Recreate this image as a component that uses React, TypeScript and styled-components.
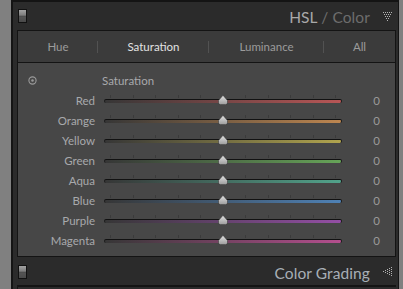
import React from "react";
import styled, { createGlobalStyle } from "styled-components";

const Global = createGlobalStyle`
  html, body { margin: 0; padding: 0; }
  body {
    background: #808080;
    font-family: Lato, "Open Sans", sans-serif;
    width: 403px;
    height: 289px;
    overflow: hidden;
  }
`;

const Page = styled.div`
  padding-left: 11px;
  height: 289px;
  box-sizing: border-box;
`;

const Panel = styled.div`
  width: 388px;
  height: 289px;
  box-sizing: border-box;
  background: #2b2b2b;
  border-left: 2px solid #141414;
  border-right: 1px solid #141414;
  border-top: 2px solid #141414;
  display: flex;
  flex-direction: column;
`;

const Header = styled.div`
  height: 28px;
  flex: none;
  display: flex;
  align-items: center;
  padding: 0 6px 0 5px;
`;

const SwitchIcon = styled.div`
  width: 9px;
  height: 14px;
  box-sizing: border-box;
  border: 1px solid #111;
  background: linear-gradient(
    to bottom,
    #a2a2a2 0%,
    #7c7c7c 45%,
    #2a2a2a 50%,
    #555 55%,
    #4a4a4a 100%
  );
`;

const Title = styled.div`
  margin-left: auto;
  font-size: 15.5px;
  color: #a9a9a9;
  letter-spacing: 0.1px;
  margin-right: 13px;
  margin-top: 1px;
`;

const TitleDim = styled.span`
  color: #6d6d6d;
`;

const Section = styled.div`
  margin: 0 2px 0 4px;
  border: 1px solid #141414;
  display: flex;
  flex-direction: column;
`;

const TabBar = styled.div`
  height: 31px;
  background: #3b3b3b;
  border-bottom: 1px solid #141414;
  display: grid;
  grid-template-columns: 80px 111px 115px 1fr;
`;

const Tab = styled.div<{ $active?: boolean; $sep?: boolean }>`
  display: flex;
  align-items: center;
  justify-content: center;
  font-size: 11.5px;
  color: ${(p) => (p.$active ? "#e2e2e2" : "#9c9c9c")};
  position: relative;
  &::before {
    content: "";
    display: ${(p) => (p.$sep ? "block" : "none")};
    position: absolute;
    left: -1px;
    top: 10px;
    width: 1px;
    height: 12px;
    background: #525252;
  }
`;

const Content = styled.div`
  background: #474747;
  padding: 7px 0 6px 0;
  display: flex;
  flex-direction: column;
`;

const Row = styled.div`
  height: 20px;
  display: grid;
  grid-template-columns: 86px 238px 1fr;
  align-items: center;
`;

const Label = styled.div`
  text-align: right;
  padding-right: 9px;
  font-size: 11.5px;
  color: #a7a9ac;
`;

const Heading = styled.div`
  font-size: 11.5px;
  color: #a7a9ac;
  margin-left: -2px;
`;

const IconCell = styled.div`
  padding-left: 10px;
  display: flex;
  align-items: center;
`;

const Value = styled.div`
  text-align: right;
  padding-right: 15px;
  font-size: 11.5px;
  color: #9a9a9a;
`;

const Slider = styled.div`
  position: relative;
  height: 20px;
  display: flex;
  align-items: center;
`;

const Track = styled.div<{ $color: string }>`
  width: 100%;
  height: 4px;
  box-sizing: border-box;
  border-radius: 2px;
  border-top: 1px solid #121212;
  border-left: 1px solid #1a1a1a;
  border-right: 1px solid #1a1a1a;
  background: linear-gradient(to right, #363636 0%, ${(p) => p.$color} 100%);
  margin-top: 1px;
`;

const Tick = styled.div`
  position: absolute;
  top: 5px;
  width: 1px;
  height: 3px;
  background: #3b3b3b;
`;

const Thumb = styled.svg`
  position: absolute;
  left: 114px;
  top: 5px;
`;

const BottomHeader = styled(Header)`
  margin-top: 1px;
  height: 27px;
`;

const BottomTitle = styled(Title)`
  color: #a8afb6;
  margin-top: 3px;
`;

const NextSection = styled.div`
  margin: 0 2px 0 4px;
  border-top: 2px solid #141414;
  border-left: 1px solid #141414;
  flex: 1;
  background: #2b2b2b;
`;

const Dots: React.FC<{ dir: "down" | "left" }> = ({ dir }) => {
  const pts: [number, number][] = [];
  for (let r = 0; r < 5; r++) {
    for (let c = r; c <= 8 - r; c += 2) pts.push([c, r * 2]);
  }
  return (
    <svg
      width="9"
      height="9"
      viewBox="0 0 9 9"
      style={{ transform: dir === "left" ? "rotate(90deg)" : undefined }}
    >
      {pts.map(([x, y], i) => (
        <rect key={i} x={x} y={y} width="1" height="1" fill="#b4b4b4" />
      ))}
    </svg>
  );
};

const TargetIcon = () => (
  <svg width="9" height="9" viewBox="0 0 9 9">
    <circle cx="4.5" cy="4.5" r="3.6" fill="none" stroke="#9a9a9a" strokeWidth="1.1" />
    <circle cx="4.5" cy="4.5" r="1.3" fill="#9a9a9a" />
  </svg>
);

const colors = [
  { name: "Red", c: "#b85656" },
  { name: "Orange", c: "#bd8650" },
  { name: "Yellow", c: "#b0a44e" },
  { name: "Green", c: "#66a458" },
  { name: "Aqua", c: "#52a38b" },
  { name: "Blue", c: "#4f82b6" },
  { name: "Purple", c: "#944fa5" },
  { name: "Magenta", c: "#b44f8e" },
];

const ticks = Array.from({ length: 11 }, (_, k) => 6 + k * 22.5);

export default function App() {
  return (
    <>
      <Global />
      <Page>
        <Panel>
          <Header>
            <SwitchIcon />
            <Title>
              HSL <TitleDim>/ Color</TitleDim>
            </Title>
            <Dots dir="down" />
          </Header>
          <Section>
            <TabBar>
              <Tab>Hue</Tab>
              <Tab $active $sep>
                Saturation
              </Tab>
              <Tab $sep>Luminance</Tab>
              <Tab $sep>All</Tab>
            </TabBar>
            <Content>
              <Row>
                <IconCell>
                  <TargetIcon />
                </IconCell>
                <Heading>Saturation</Heading>
              </Row>
              {colors.map((col) => (
                <Row key={col.name}>
                  <Label>{col.name}</Label>
                  <Slider>
                    {ticks.map((t) => (
                      <Tick key={t} style={{ left: t }} />
                    ))}
                    <Track $color={col.c} />
                    <Thumb width="10" height="10" viewBox="0 0 10 10">
                      <defs>
                        <linearGradient id="tg" x1="0" y1="0" x2="0" y2="1">
                          <stop offset="0" stopColor="#e2e2e2" />
                          <stop offset="1" stopColor="#9c9c9c" />
                        </linearGradient>
                      </defs>
                      <path
                        d="M5 0.3 L9.6 5.5 L9.6 7.8 Q9.6 9.7 7.6 9.7 L2.4 9.7 Q0.4 9.7 0.4 7.8 L0.4 5.5 Z"
                        fill="url(#tg)"
                        stroke="#2a2a2a"
                        strokeWidth="0.6"
                      />
                    </Thumb>
                  </Slider>
                  <Value>0</Value>
                </Row>
              ))}
            </Content>
          </Section>
          <BottomHeader>
            <SwitchIcon />
            <BottomTitle>Color Grading</BottomTitle>
            <Dots dir="left" />
          </BottomHeader>
          <NextSection />
        </Panel>
      </Page>
    </>
  );
}
